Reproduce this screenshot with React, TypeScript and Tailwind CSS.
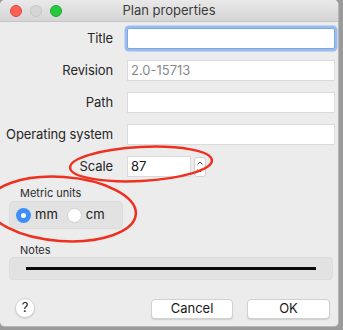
import React from 'react';

const font = { fontFamily: '"Inter", "Liberation Sans", sans-serif' };

function Field({ label, children }: { label: string; children: React.ReactNode }) {
  return (
    <div className="flex items-center h-[21px]">
      <div className="w-[114px] pr-[1px] text-right text-[13px] tracking-[-0.1px] text-[#262626] whitespace-nowrap">{label}</div>
      <div className="flex-1 ml-[13px] flex items-center">{children}</div>
    </div>
  );
}

export default function App() {
  return (
    <div className="w-[343px] h-[330px] bg-[#9a9a9a] overflow-hidden relative" style={font}>
      <div className="w-[339px] h-[327px] bg-[#ececec] rounded-[5px] overflow-hidden flex flex-col border-r border-b border-[#b8b8b8]">
        {/* title bar */}
        <div className="h-[22px] flex items-center relative bg-gradient-to-b from-[#e9e9e9] to-[#d5d5d5] border-b border-[#c4c4c4] shrink-0">
          <div className="flex items-center gap-[8px] pl-[10px]">
            <span className="w-[12px] h-[12px] rounded-full bg-[#fe5f57] border border-[#e2463f]" />
            <span className="w-[12px] h-[12px] rounded-full bg-[#d6d6d6] border border-[#c4c4c4]" />
            <span className="w-[12px] h-[12px] rounded-full bg-[#28c840] border border-[#1aab29]" />
          </div>
          <div className="absolute inset-0 flex items-center justify-center text-[13px] text-[#3c3c3c]">Plan properties</div>
        </div>

        {/* form rows */}
        <div className="flex flex-col gap-[11px] pt-[6px] pr-[3px]">
          <Field label="Title">
            <div className="w-full h-[21px] bg-white border border-[#7da6e6] rounded-[2px] shadow-[0_0_0_2.5px_#9bbcee]" />
          </Field>
          <Field label="Revision">
            <div className="w-full h-[21px] bg-white border border-[#dadada] flex items-center pl-[3px] text-[13px] text-[#8a8a8a]">2.0-15713</div>
          </Field>
          <Field label="Path">
            <div className="w-full h-[21px] bg-white border border-[#dadada]" />
          </Field>
          <Field label="Operating system">
            <div className="w-full h-[21px] bg-white border border-[#dadada]" />
          </Field>
          <Field label="Scale">
            <div className="w-[64px] h-[21px] bg-white border border-[#dadada] flex items-center pl-[3px] text-[13px] text-[#1a1a1a]">87</div>
            <div className="ml-[3px] w-[12px] h-[20px] bg-white border border-[#d0d0d0] rounded-[3px] flex flex-col items-center justify-center">
              <svg width="8" height="16" viewBox="0 0 8 16">
                <path d="M1.5 5.5 L4 3 L6.5 5.5" fill="none" stroke="#444" strokeWidth="1" />
                <path d="M1.5 10.5 L4 13 L6.5 10.5" fill="none" stroke="#444" strokeWidth="1" />
              </svg>
            </div>
          </Field>
        </div>

        {/* metric units */}
        <div className="mt-[10px] pl-[20px] text-[11px] text-[#2b2b2b] leading-[13px]">Metric units</div>
        <div className="mt-[1px] ml-[9px] w-[114px] h-[28px] bg-[#e2e2e2] rounded-[5px] border border-[#dcdcdc] flex items-center pl-[6px] text-[13px] text-[#1a1a1a]">
          <span className="w-[15px] h-[15px] rounded-full bg-[#3d8ff7] flex items-center justify-center">
            <span className="w-[5px] h-[5px] rounded-full bg-white" />
          </span>
          <span className="ml-[4px]">mm</span>
          <span className="ml-[9px] w-[15px] h-[15px] rounded-full bg-white border border-[#cfcfcf]" />
          <span className="ml-[4px]">cm</span>
        </div>

        {/* notes */}
        <div className="mt-[15px] pl-[20px] text-[11px] text-[#2b2b2b] leading-[13px]">Notes</div>
        <div className="mt-[0px] ml-[9px] mr-[5px] h-[23px] bg-[#e2e2e2] rounded-[4px] border border-[#dcdcdc] flex items-center px-[16px]">
          <div className="w-full h-[3px] bg-[#0a0a0a]" />
        </div>

        {/* buttons */}
        <div className="mt-[19px] flex items-center pl-[15px] pr-[8px]">
          <div className="w-[20px] h-[20px] -mt-[2px] rounded-full bg-white border border-[#d3d3d3] shadow-[0_1px_1px_rgba(0,0,0,0.12)] flex items-center justify-center text-[13px] text-[#222]">?</div>
          <div className="ml-auto w-[82px] h-[20px] bg-white rounded-[4px] border border-[#d0d0d0] shadow-[0_1px_1px_rgba(0,0,0,0.12)] flex items-center justify-center text-[13px] text-[#1a1a1a]">Cancel</div>
          <div className="ml-[14px] w-[83px] h-[20px] bg-white rounded-[4px] border border-[#d0d0d0] shadow-[0_1px_1px_rgba(0,0,0,0.12)] flex items-center justify-center text-[13px] text-[#1a1a1a]">OK</div>
        </div>
      </div>

      {/* red annotation ellipses */}
      <svg className="absolute left-0 top-0 pointer-events-none" width="343" height="330" viewBox="0 0 343 330">
        <ellipse cx="141" cy="164" rx="71" ry="17" fill="none" stroke="#f0301e" strokeWidth="2.5" transform="rotate(-3 141 164)" />
        <ellipse cx="62" cy="209" rx="74" ry="32" fill="none" stroke="#f0301e" strokeWidth="2.5" transform="rotate(4 62 209)" />
      </svg>
    </div>
  );
}
